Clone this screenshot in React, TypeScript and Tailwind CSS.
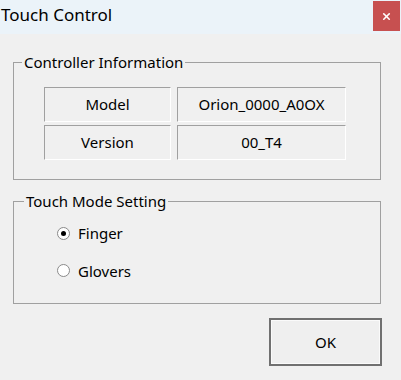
import { X } from 'lucide-react';

const font = { fontFamily: '"Noto Sans", "Open Sans", sans-serif' };

function Cell({ children }: { children: React.ReactNode }) {
  return (
    <div className="flex h-[35px] items-center justify-center border border-t-[#a0a0a0] border-l-[#a0a0a0] border-b-white border-r-white text-[15px] text-black">
      {children}
    </div>
  );
}

function Radio({ label, checked }: { label: string; checked?: boolean }) {
  return (
    <div className="flex items-center">
      <span className="flex h-[13px] w-[13px] items-center justify-center rounded-full border border-[#8a8a8a] bg-white">
        {checked && <span className="h-[5px] w-[5px] rounded-full bg-black" />}
      </span>
      <span className="ml-[8px] text-[15px] text-black">{label}</span>
    </div>
  );
}

export default function App() {
  return (
    <div className="flex h-[380px] w-[401px] flex-col bg-[#f0f0f0]" style={font}>
      {/* title bar */}
      <div className="flex h-[34px] items-start bg-[#ebf3f9]">
        <span className="pl-[1px] pt-[5px] text-[17px] leading-[20px] text-black">Touch Control</span>
        <div className="mt-[1px] ml-auto mr-[1px] flex h-[30px] w-[27px] items-center justify-center bg-[#c75050]">
          <X size={11} strokeWidth={3.5} color="white" />
        </div>
      </div>

      <div className="flex flex-col px-[13px]">
        {/* Controller Information */}
        <fieldset className="mt-[18px] h-[128px] w-[368px] border border-[#a0a0a0] pt-[15px]">
          <legend className="ml-[8px] px-[2px] text-[15px] leading-[20px] text-black">Controller Information</legend>
          <div className="ml-[30px] grid grid-cols-[127px_169px] gap-x-[6px] gap-y-[3px]">
            <Cell>Model</Cell>
            <Cell>Orion_0000_A0OX</Cell>
            <Cell>Version</Cell>
            <Cell>00_T4</Cell>
          </div>
        </fieldset>

        {/* Touch Mode Setting */}
        <fieldset className="mt-[11px] h-[113px] w-[368px] border border-[#a0a0a0] pt-[11px]">
          <legend className="ml-[10px] px-[2px] text-[15px] leading-[20px] text-black">Touch Mode Setting</legend>
          <div className="ml-[43px] flex flex-col gap-[15px]">
            <Radio label="Finger" checked />
            <Radio label="Glovers" />
          </div>
        </fieldset>

        <div className="mt-[14px] flex justify-end">
          <button className="mr-[6px] flex h-[48px] w-[113px] items-center justify-center border-2 border-[#707070] bg-[#efefef] text-[15px] text-black shadow-[inset_0_0_0_1px_#fafafa]">
            OK
          </button>
        </div>
      </div>
    </div>
  );
}
